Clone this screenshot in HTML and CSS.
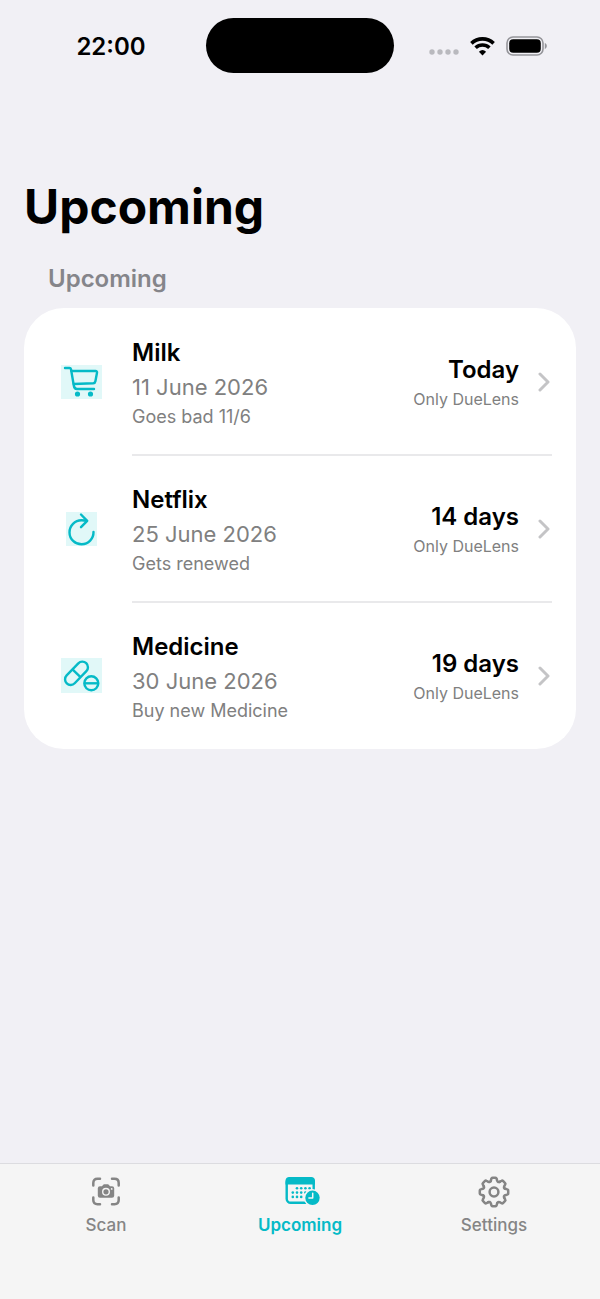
FILE: index.html
```html
<!DOCTYPE html>
<html lang="en">
<head>
    <meta charset="UTF-8">
    <meta name="viewport" content="width=device-width, initial-scale=1.0">
    <title>Upcoming</title>
    <link rel="stylesheet" href="styles.css">
</head>
<body>
    <div class="status-bar">
        <span class="time">22:00</span>
        <div class="island"></div>
        <div class="status-icons">
            <svg class="signal" width="30" height="6" viewBox="0 0 30 6" fill="#b9b9be">
                <circle cx="3" cy="3" r="2.7"/>
                <circle cx="11" cy="3" r="2.7"/>
                <circle cx="19" cy="3" r="2.7"/>
                <circle cx="27" cy="3" r="2.7"/>
            </svg>
            <svg width="25" height="20" viewBox="0 0 25 20">
                <g fill="none" stroke="#000" stroke-width="3.6">
                    <path d="M1.4 7.4a16 16 0 0 1 22.2 0"/>
                    <path d="M5.6 11.8a10 10 0 0 1 13.8 0"/>
                </g>
                <path d="M12.5 19.4l-3.6-3.7a5.4 5.4 0 0 1 7.2 0z"/>
            </svg>
            <svg width="42" height="20" viewBox="0 0 42 20">
                <rect x="1" y="1" width="36" height="18" rx="6" fill="none" stroke="#95959a" stroke-width="1.6"/>
                <rect x="3.2" y="3.2" width="31.6" height="13.6" rx="4"/>
                <path d="M38.8 7v6c1.3-.5 2-1.6 2-3s-.7-2.5-2-3z" fill="#95959a"/>
            </svg>
        </div>
    </div>

    <main>
        <h1>Upcoming</h1>
        <h2>Upcoming</h2>
        <ul class="list">
            <li>
                <a class="item" href="#milk">
                    <span class="icon">
                        <svg width="41" height="34" viewBox="0 0 41 34" stroke-linecap="round" stroke-linejoin="round">
                            <path d="M4 3h4.500q1.200 0 1.500 1.300L12.800 20.500q.5 3.500 3.200 3.500h17"/>
                            <path d="M10.500 6h24q1.800 0 1.500 1.700l-1.600 8.500q-.3 1.900-2.200 2.100L12.700 19"/>
                            <circle cx="16.500" cy="29" r="1.400" fill="#05bac7"/>
                            <circle cx="29.500" cy="29" r="1.400" fill="#05bac7"/>
                        </svg>
                    </span>
                    <span class="details">
                        <span class="name">Milk</span>
                        <span class="date">11 June 2026</span>
                        <span class="note">Goes bad 11/6</span>
                    </span>
                    <span class="due">
                        <span class="days">Today</span>
                        <span class="source">Only DueLens</span>
                    </span>
                    <svg class="chevron" width="12" height="20" viewBox="0 0 12 20"><path d="M2 2l8 8-8 8"/></svg>
                </a>
            </li>
            <li>
                <a class="item" href="#netflix">
                    <span class="icon">
                        <svg width="31" height="34" viewBox="0 0 31 34" stroke-linecap="round" stroke-linejoin="round">
                            <path d="M27.500 20A12 12 0 1 1 15.500 8.300c2 0 3.800.1 5.200.5"/>
                            <path d="M15 2.500l6.200 6.300-6.200 6.400"/>
                        </svg>
                    </span>
                    <span class="details">
                        <span class="name">Netflix</span>
                        <span class="date">25 June 2026</span>
                        <span class="note">Gets renewed</span>
                    </span>
                    <span class="due">
                        <span class="days">14 days</span>
                        <span class="source">Only DueLens</span>
                    </span>
                    <svg class="chevron" width="12" height="20" viewBox="0 0 12 20"><path d="M2 2l8 8-8 8"/></svg>
                </a>
            </li>
            <li>
                <a class="item" href="#medicine">
                    <span class="icon">
                        <svg width="41" height="35" viewBox="0 0 41 35">
                            <g transform="rotate(-46 15.500 15.300)">
                                <rect x="1.500" y="9.700" width="28" height="11.200" rx="5.600"/>
                                <path d="M15.500 9.700v11.200"/>
                            </g>
                            <circle cx="30.300" cy="25.300" r="7"/>
                            <path d="M23.500 25.300h13.600"/>
                        </svg>
                    </span>
                    <span class="details">
                        <span class="name">Medicine</span>
                        <span class="date">30 June 2026</span>
                        <span class="note">Buy new Medicine</span>
                    </span>
                    <span class="due">
                        <span class="days">19 days</span>
                        <span class="source">Only DueLens</span>
                    </span>
                    <svg class="chevron" width="12" height="20" viewBox="0 0 12 20"><path d="M2 2l8 8-8 8"/></svg>
                </a>
            </li>
        </ul>
    </main>

    <nav class="tab-bar">
        <a href="#scan">
            <svg width="30" height="32" viewBox="0 0 30 32">
                <path d="M2.300 9.500V7q0-4.200 4.200-4.200H9M21 2.800h2.500q4.200 0 4.200 4.200v2.500M27.700 21.500V24q0 4.200-4.200 4.200H21M9 28.200H6.500q-4.200 0-4.200-4.200v-2.500" fill="none" stroke="#858585" stroke-width="2.500" stroke-linecap="round"/>
                <path d="M9 10.300h2l1.200-1.500q.4-.5 1-.5h3.600q.6 0 1 .5l1.200 1.500h2q2.200 0 2.200 2v7.500q0 2-2.200 2H9q-2.200 0-2.200-2v-7.500q0-2 2.200-2z" fill="#858585"/>
                <circle cx="15" cy="15.800" r="3.300" fill="none" stroke="#f5f5f5" stroke-width="1.400"/>
                <circle cx="20.700" cy="12.900" r=".9" fill="#f5f5f5"/>
            </svg>
            <span>Scan</span>
        </a>
        <a class="active" href="#upcoming">
            <svg width="40" height="32" viewBox="-5 0 40 32">
                <rect x="1.700" y="2.200" width="27" height="24.600" rx="4" fill="none" stroke="#05bac7" stroke-width="2.400"/>
                <path d="M.5 8.500V5q0-4 4-4H26q4 0 4 4v3.500z" fill="#05bac7"/>
                <g fill="#05bac7">
                    <circle cx="12" cy="12.300" r="1.300"/><circle cx="16.200" cy="12.300" r="1.300"/><circle cx="20.400" cy="12.300" r="1.300"/><circle cx="24.600" cy="12.300" r="1.300"/>
                    <circle cx="7.800" cy="16.600" r="1.300"/><circle cx="12" cy="16.600" r="1.300"/><circle cx="16.200" cy="16.600" r="1.300"/><circle cx="20.400" cy="16.600" r="1.300"/>
                    <circle cx="7.800" cy="20.900" r="1.300"/><circle cx="12" cy="20.900" r="1.300"/><circle cx="16.200" cy="20.900" r="1.300"/>
                </g>
                <circle cx="27.500" cy="21.800" r="8.800" fill="#f5f5f5"/>
                <circle cx="27.500" cy="21.800" r="7.200" fill="#05bac7"/>
                <path d="M27.700 17.300V22h-3.800" fill="none" stroke="#f5f5f5" stroke-width="1.500" stroke-linecap="round" stroke-linejoin="round"/>
            </svg>
            <span>Upcoming</span>
        </a>
        <a href="#settings">
            <svg width="32" height="32" viewBox="-16 -16 32 32" fill="none" stroke="#858585" stroke-width="2.500" stroke-linecap="round" stroke-linejoin="round">
                <g id="tooth">
                    <path d="M-3.200-11.200l.6-2.100q.2-.9 1.100-.9h3q.9 0 1.100.9l.6 2.100q.9 1.900 2.450 1.020"/>
                </g>
                <use href="#tooth" transform="rotate(45)"/>
                <use href="#tooth" transform="rotate(90)"/>
                <use href="#tooth" transform="rotate(135)"/>
                <use href="#tooth" transform="rotate(180)"/>
                <use href="#tooth" transform="rotate(225)"/>
                <use href="#tooth" transform="rotate(270)"/>
                <use href="#tooth" transform="rotate(315)"/>
                <circle r="4.400"/>
            </svg>
            <span>Settings</span>
        </a>
    </nav>
</body>
</html>
```

FILE: styles.css
```css
* {
    margin: 0;
    padding: 0;
    box-sizing: border-box;
}

body {
    min-height: 100vh;
    display: flex;
    flex-direction: column;
    background-color: #f1f0f5;
    color: #000;
    font-family: Inter, "Liberation Sans", sans-serif;
}

a {
    color: inherit;
    text-decoration: none;
}

svg {
    display: block;
    flex-shrink: 0;
}

/* Status bar */
.status-bar {
    display: grid;
    grid-template-columns: 1fr 188px 1fr;
    align-items: center;
    padding-top: 18px;
}

.time {
    padding: 2px 0 0 16px;
    text-align: center;
    font-size: 24px;
    line-height: 32px;
    font-weight: 600;
}

.island {
    height: 55px;
    border-radius: 28px;
    background-color: #000;
}

.status-icons {
    display: flex;
    align-items: center;
    justify-content: center;
    gap: 11px;
    padding-right: 17px;
}

.signal {
    margin-top: 12px;
}

/* Page content */
main {
    flex: 1;
    padding: 104px 24px 24px;
}

h1 {
    font-size: 48px;
    line-height: 60px;
    font-weight: 700;
}

h2 {
    margin: 26px 24px 13px;
    color: #85858a;
    font-size: 24px;
    line-height: 32px;
    font-weight: 600;
}

.list {
    list-style: none;
    background-color: #fff;
    border-radius: 40px;
}

.item {
    display: flex;
    align-items: center;
    min-height: 147px;
    padding-right: 26px;
    position: relative;
}

/* divider starts under the text column */
.list li + li .item::before {
    content: "";
    position: absolute;
    top: -1px;
    left: 108px;
    right: 24px;
    height: 2px;
    background-color: #e9e9eb;
}

.icon {
    width: 108px;
    padding: 0 30px 0 36px;
    display: flex;
    justify-content: center;
}

.icon svg {
    background-color: #e1f8f8;
    fill: none;
    stroke: #05bac7;
    stroke-width: 2.4;
}

.details,
.due {
    display: flex;
    flex-direction: column;
    padding-top: 2px;
}

.details {
    flex: 1;
}

.due {
    align-items: flex-end;
    margin-right: 19px;
}

.name,
.days {
    font-size: 24px;
    line-height: 32px;
    font-weight: 600;
}

.date {
    color: #808080;
    font-size: 22px;
    line-height: 36px;
}

.note {
    color: #808080;
    font-size: 18px;
    line-height: 24px;
}

.source {
    color: #808080;
    font-size: 16px;
    line-height: 26px;
}

.chevron {
    fill: none;
    stroke: #c4c4c6;
    stroke-width: 3;
    stroke-linecap: round;
    stroke-linejoin: round;
}

/* Bottom tabs */
.tab-bar {
    display: grid;
    grid-template-columns: repeat(3, 1fr);
    min-height: 136px;
    padding: 12px 9px 0;
    border-top: 1px solid #dcdce0;
    background-color: #f5f5f5;
    color: #858585;
    font-size: 17px;
    line-height: 24px;
    font-weight: 500;
}

.tab-bar a {
    display: flex;
    flex-direction: column;
    align-items: center;
    gap: 5px;
}

.tab-bar .active {
    color: #05bac7;
    font-weight: 600;
}
```
